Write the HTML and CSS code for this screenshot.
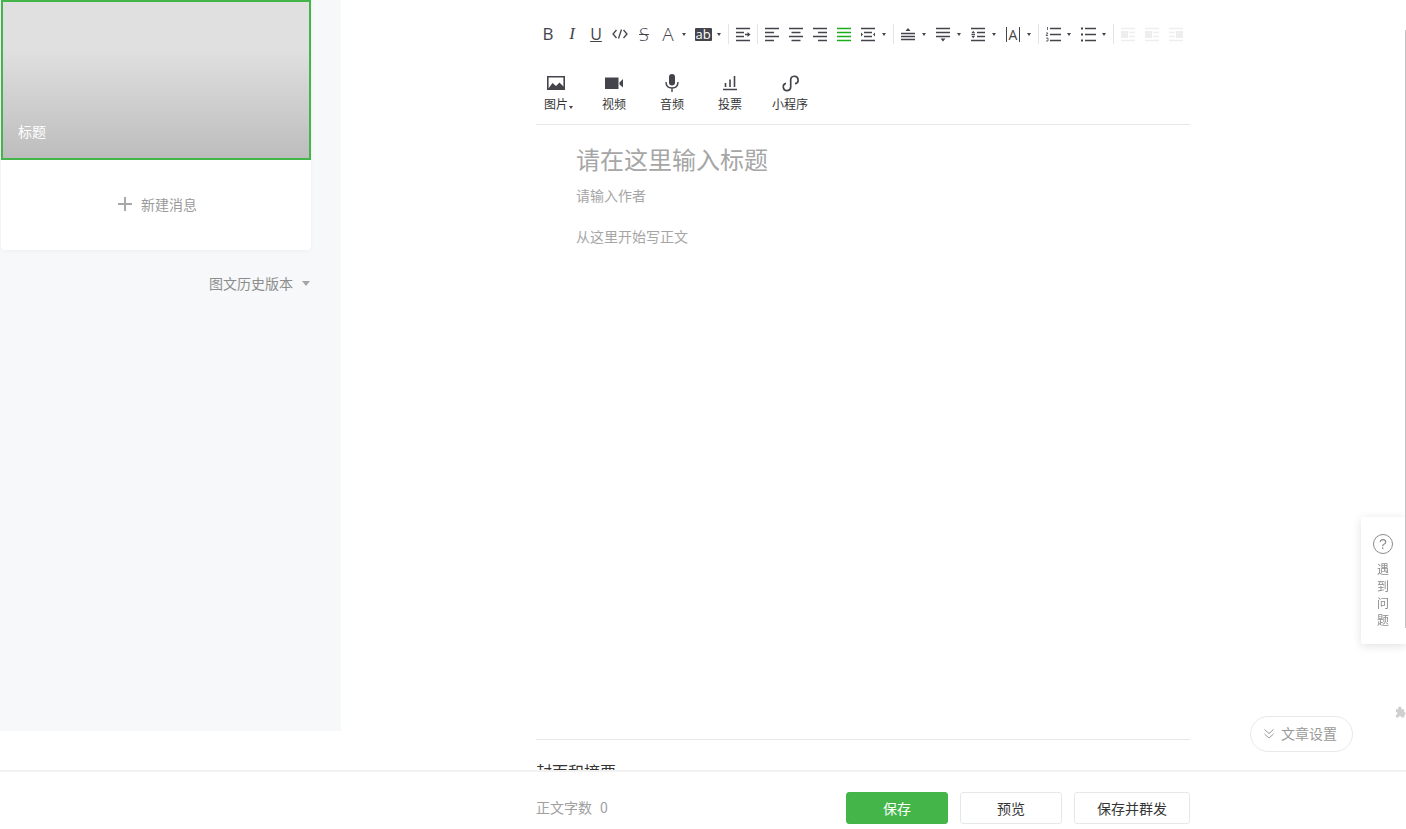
FILE: index.html
```html
<!DOCTYPE html>
<html lang="zh-CN">
<head>
<meta charset="utf-8">
<title>图文编辑</title>
<link rel="stylesheet" href="styles.css">
</head>
<body>
<svg class="sprite" aria-hidden="true">
  <symbol id="i-code" viewBox="0 0 16 16"><path d="M4.500 4 1 8l3.500 4M11.500 4 15 8l-3.500 4M9.500 3.500l-3 9" fill="none" stroke="currentColor" stroke-width="1.300"/></symbol>
  <symbol id="i-indent" viewBox="0 0 16 16"><path d="M1 2.500h14M1 6.500h8M1 10.500h8M1 14.500h14M10 8.500h3.500" fill="none" stroke="currentColor" stroke-width="1.400"/><path d="M12.500 6 15.500 8.500 12.500 11z" fill="currentColor"/></symbol>
  <symbol id="i-left" viewBox="0 0 16 16"><path d="M1 2.500h14M1 6.500h9M1 10.500h14M1 14.500h9" fill="none" stroke="currentColor" stroke-width="1.300"/></symbol>
  <symbol id="i-center" viewBox="0 0 16 16"><path d="M1 2.500h14M3.500 6.500h9M1 10.500h14M3.500 14.500h9" fill="none" stroke="currentColor" stroke-width="1.300"/></symbol>
  <symbol id="i-right" viewBox="0 0 16 16"><path d="M1 2.500h14M6 6.500h9M1 10.500h14M6 14.500h9" fill="none" stroke="currentColor" stroke-width="1.300"/></symbol>
  <symbol id="i-justify" viewBox="0 0 16 16"><path d="M1 2.500h14M1 6.500h14M1 10.500h14M1 14.500h14" fill="none" stroke="currentColor" stroke-width="1.300"/></symbol>
  <symbol id="i-dist" viewBox="0 0 16 16"><path d="M1 2.500h14M4 6.500h8M4 10.500h8M1 14.500h14" fill="none" stroke="currentColor" stroke-width="1.300"/><path d="M1 6.500v4L3 8.500zM15 6.500v4L13 8.500z" fill="currentColor"/></symbol>
  <symbol id="i-before" viewBox="0 0 16 16"><path d="M1 7.500h14M1 10.500h14M1 13.500h14" fill="none" stroke="currentColor" stroke-width="1.300"/><path d="M8 2 10.500 5h-5z" fill="currentColor"/></symbol>
  <symbol id="i-after" viewBox="0 0 16 16"><path d="M1 2.500h14M1 6.500h14M1 10.500h14" fill="none" stroke="currentColor" stroke-width="1.300"/><path d="M8 15.500 10.500 12.500h-5z" fill="currentColor"/></symbol>
  <symbol id="i-height" viewBox="0 0 16 16"><path d="M1 2.500h14M7 6.500h8M7 10.500h8M1 14.500h14M1.500 8.500h3.500" fill="none" stroke="currentColor" stroke-width="1.300"/><path d="M3.200 4.800 5 7H1.500zM3.200 12.200 5 10H1.500z" fill="currentColor"/></symbol>
  <symbol id="i-ol" viewBox="0 0 16 16"><path d="M2.500 1v3M1 7h2L1 9.500h2M1 12h2v3H1" fill="none" stroke="currentColor" stroke-width=".8"/><path d="M5 2.500h11M5 8.500h11M5 14.500h11" fill="none" stroke="currentColor" stroke-width="1.400"/></symbol>
  <symbol id="i-ul" viewBox="0 0 16 16"><path d="M5 2.500h11M5 8.500h11M5 14.500h11" fill="none" stroke="currentColor" stroke-width="1.400"/><path d="M1 1.500h2v2H1zM1 7.500h2v2H1zM1 13.500h2v2H1z" fill="currentColor"/></symbol>
  <symbol id="i-fl" viewBox="0 0 16 16"><path d="M1 2.500h14M1 14.500h14M9 6.500h6M9 10.500h6" fill="none" stroke="currentColor" stroke-width="1.300"/><path d="M1 5h7v7H1z" fill="currentColor"/></symbol>
  <symbol id="i-fr" viewBox="0 0 16 16"><path d="M1 2.500h14M1 14.500h14M1 6.500h6M1 10.500h6" fill="none" stroke="currentColor" stroke-width="1.300"/><path d="M8 5h7v7H8z" fill="currentColor"/></symbol>
</svg>

<div class="page">
  <aside class="side">
    <div class="card">
      <div class="cover"><span class="cover-title">标题</span></div>
      <div class="new-msg"><span class="plus"></span><span>新建消息</span></div>
    </div>
    <div class="history"><span>图文历史版本</span><i class="tri tri-history"></i></div>
  </aside>

  <main class="main">
    <div class="toolbar">
      <span class="btn txt txt-b">B</span>
      <span class="btn txt txt-i">I</span>
      <span class="btn txt txt-u"><u>U</u></span>
      <span class="btn"><svg class="ic"><use href="#i-code"/></svg></span>
      <span class="btn txt txt-s">S</span>
      <span class="btn txt txt-a">A</span><i class="caret"></i>
      <span class="btn push"><span class="ab">ab</span></span><i class="caret"></i>
      <i class="sep"></i>
      <span class="btn first"><svg class="ic"><use href="#i-indent"/></svg></span>
      <i class="sep tight"></i>
      <span class="btn first"><svg class="ic"><use href="#i-left"/></svg></span>
      <span class="btn"><svg class="ic"><use href="#i-center"/></svg></span>
      <span class="btn"><svg class="ic"><use href="#i-right"/></svg></span>
      <span class="btn on"><svg class="ic"><use href="#i-justify"/></svg></span>
      <span class="btn"><svg class="ic"><use href="#i-dist"/></svg></span><i class="caret"></i>
      <i class="sep"></i>
      <span class="btn first"><svg class="ic"><use href="#i-before"/></svg></span><i class="caret"></i>
      <span class="btn push"><svg class="ic"><use href="#i-after"/></svg></span><i class="caret"></i>
      <span class="btn push"><svg class="ic"><use href="#i-height"/></svg></span><i class="caret"></i>
      <span class="btn push"><span class="txt txt-w">A</span></span><i class="caret"></i>
      <i class="sep"></i>
      <span class="btn first"><svg class="ic"><use href="#i-ol"/></svg></span><i class="caret"></i>
      <span class="btn push"><svg class="ic"><use href="#i-ul"/></svg></span><i class="caret"></i>
      <i class="sep"></i>
      <span class="btn first off"><svg class="ic"><use href="#i-fl"/></svg></span>
      <span class="btn off"><svg class="ic"><use href="#i-fl"/></svg></span>
      <span class="btn off"><svg class="ic"><use href="#i-fr"/></svg></span>
    </div>

    <div class="insert">
      <div class="ins">
        <svg class="ins-ic" viewBox="0 0 20 18"><path d="M1.800 2.800h16.400v12.400H1.800z" fill="none" stroke="currentColor" stroke-width="1.600"/><path d="M2 15 6.500 9l3.500 3 3.500-3.500L18 13v2H2z" fill="currentColor"/></svg>
        <span class="ins-label">图片<i class="mini-tri"></i></span>
      </div>
      <div class="ins">
        <svg class="ins-ic" viewBox="0 0 20 18"><path d="M1 3.500h13.500v11.500H1z" fill="currentColor"/><path d="M15.500 8.500 19 5v8.500l-3.500-3z" fill="currentColor"/></svg>
        <span class="ins-label">视频</span>
      </div>
      <div class="ins">
        <svg class="ins-ic" viewBox="0 0 20 18"><rect x="7" y="0" width="6" height="11.500" rx="3" fill="currentColor"/><path d="M4 8c0 4 2.500 6 6 6s6-2 6-6M10 14v4" fill="none" stroke="currentColor" stroke-width="1.400"/></svg>
        <span class="ins-label">音频</span>
      </div>
      <div class="ins">
        <svg class="ins-ic" viewBox="0 0 20 18"><path d="M3 15.500h14M5.500 13V9M10 13V5.500M14.500 13V2" fill="none" stroke="currentColor" stroke-width="1.600"/></svg>
        <span class="ins-label">投票</span>
      </div>
      <div class="ins ins-last">
        <svg class="ins-ic" viewBox="0 0 20 18"><path d="M6 9.400A3.700 3.700 0 1 0 10.700 13V6A3.700 3.700 0 1 1 15 9.600" fill="none" stroke="currentColor" stroke-width="1.700"/></svg>
        <span class="ins-label">小程序</span>
      </div>
    </div>

    <div class="editor">
      <h1 class="ph-title">请在这里输入标题</h1>
      <p class="ph-author">请输入作者</p>
      <p class="ph-body">从这里开始写正文</p>
    </div>

    <section class="extra">
      <h2 class="extra-title">封面和摘要</h2>
    </section>
  </main>
</div>

<i class="scroll-line"></i>
<aside class="help">
  <span class="help-q">?</span>
  <span class="help-text">遇到问题</span>
</aside>
<svg class="puzzle" viewBox="0 0 12 12"><path d="M1 3h2.500C3 1 4 0 5.200 0S7.400 1 7 3h3v3c2-.5 2 4 0 3.500V12H7c.5-2-3.500-2-3 0H1V9c2 .5 2-3.500 0-3z" fill="currentColor"/></svg>
<button class="settings">
  <svg class="chev" viewBox="0 0 12 12"><path d="M1.500 1.500 6 5.500l4.500-4M1.500 6 6 10l4.500-4" fill="none" stroke="currentColor" stroke-width="1"/></svg>
  <span class="settings-text">文章设置</span>
</button>

<footer class="bar">
  <div class="bar-inner">
    <span class="count">正文字数<b class="count-num">0</b></span>
    <span class="bar-btns">
      <button class="fbtn primary">保存</button>
      <button class="fbtn">预览</button>
      <button class="fbtn wide">保存并群发</button>
    </span>
  </div>
</footer>
</body>
</html>
```

FILE: styles.css
```css
* { box-sizing: border-box; }
html, body {
  margin: 0;
  height: 829px;
  overflow: hidden;
  background: #fff;
  font-family: "Noto Sans CJK SC", "Liberation Sans", sans-serif;
  color: #353535;
}
.sprite { display: none; }
i { font-style: normal; display: block; }

.page { display: flex; align-items: flex-start; }

/* sidebar */
.side {
  width: 341px;
  height: 731px;
  flex: none;
  background: #f6f8f9;
  padding-left: 1px;
}
.card {
  width: 310px;
  height: 250px;
  background: #fff;
  border-radius: 0 0 4px 4px;
  box-shadow: 0 1px 4px rgba(0, 0, 0, .04);
}
.cover {
  height: 160px;
  border: 2px solid #44b549;
  background: linear-gradient(#e0e0e0 0, #e0e0e0 30%, #bdbdbd 100%);
  padding: 119px 0 0 15px;
}
.cover-title {
  display: block;
  color: #fff;
  font-size: 14px;
  line-height: 20px;
}
.new-msg {
  height: 88px;
  display: flex;
  align-items: center;
  padding-left: 117px;
  font-size: 14px;
  color: #9a9a9a;
  gap: 9px;
}
.plus {
  width: 14px;
  height: 14px;
  background:
    linear-gradient(#a8a8a8, #a8a8a8) center / 14px 2px no-repeat,
    linear-gradient(#a8a8a8, #a8a8a8) center / 2px 14px no-repeat;
}
.history {
  margin-top: 23px;
  width: 309px;
  display: flex;
  justify-content: flex-end;
  align-items: center;
  font-size: 14px;
  line-height: 20px;
  color: #8d8d8d;
  gap: 9px;
}
.tri { width: 0; height: 0; }
.tri-history {
  border: 4.500px solid transparent;
  border-top: 5px solid #a5a5a5;
  border-bottom: 0;
}

/* main column */
.main {
  width: 654px;
  margin-left: 195px;
  flex: none;
}
.toolbar {
  display: flex;
  align-items: center;
  height: 46px;
  padding-top: 22px;
}
.btn {
  width: 24px;
  height: 24px;
  flex: none;
  display: flex;
  align-items: center;
  justify-content: center;
  color: #44444c;
}
.btn.push { margin-left: 3px; }
.btn.first { margin-left: 2px; }
.btn.on { color: #1aad19; }
.btn.off { color: #eeeeee; }
.ic { width: 16px; height: 16px; display: block; }
.txt { font-family: "Open Sans", "Liberation Sans", sans-serif; line-height: 24px; }
.txt-b { font-size: 17px; }
.txt-i { font-size: 17px; font-style: italic; font-family: "Liberation Serif", serif; }
.txt-u { font-size: 16px; }
.txt-s { font-size: 18px; font-weight: 300; text-decoration: line-through; }
.txt-a { font-size: 19px; font-weight: 300; }
.txt-w {
  display: block;
  height: 15px;
  padding: 0 2px;
  border-left: 1.500px solid #44444c;
  border-right: 1.500px solid #44444c;
  font-size: 14px;
  line-height: 15px;
}
.ab {
  display: block;
  width: 17px;
  height: 13px;
  background: #44444c;
  color: #fff;
  border-radius: 1px;
  font: 13px/12px "Open Sans", "Liberation Sans", sans-serif;
  text-align: center;
}
.caret {
  width: 8px;
  flex: none;
  display: flex;
  justify-content: center;
}
.caret::before {
  content: "";
  border: 2px solid transparent;
  border-top: 3px solid #44444c;
  border-bottom: 0;
}
.sep {
  width: 1px;
  height: 20px;
  margin-left: 5px;
  background: #e4e4e4;
  flex: none;
}
.sep.tight { margin-left: 2px; }

.insert {
  display: flex;
  gap: 34px;
  height: 79px;
  padding: 28px 0 0 8px;
  border-bottom: 1px solid #e7e7eb;
}
.ins {
  display: flex;
  flex-direction: column;
  align-items: center;
  color: #44444c;
}
.ins-last { margin-left: -4px; }
.ins-ic { width: 20px; height: 18px; display: block; }
.ins-label {
  position: relative;
  margin-top: 3px;
  font-size: 12px;
  line-height: 18px;
  color: #353535;
}
.mini-tri {
  position: absolute;
  right: -5px;
  bottom: 4px;
  border: 2px solid transparent;
  border-top: 3px solid #44444c;
  border-bottom: 0;
}

.editor {
  height: 614px;
  padding: 17px 40px 0;
}
.ph-title {
  margin: 0;
  font-size: 24px;
  font-weight: 400;
  line-height: 34px;
  color: #a6a6a6;
}
.ph-author {
  margin: 8px 0 0;
  font-size: 14px;
  line-height: 22px;
  color: #a6a6a6;
}
.ph-body {
  margin: 19px 0 0;
  font-size: 14px;
  line-height: 22px;
  color: #a6a6a6;
}
.extra {
  border-top: 1px solid #e7e7eb;
  padding-top: 19px;
}
.extra-title {
  margin: 0;
  font-size: 16px;
  font-weight: 400;
  line-height: 24px;
  color: #353535;
}

/* overlays */
.scroll-line {
  position: fixed;
  right: 0;
  top: 30px;
  width: 1px;
  height: 598px;
  background: #c4c4c4;
  z-index: 3;
}
.help {
  position: fixed;
  right: 0;
  top: 517px;
  width: 45px;
  height: 127px;
  background: #fff;
  border-radius: 3px 0 0 3px;
  box-shadow: 0 2px 10px rgba(0, 0, 0, .12);
  display: flex;
  flex-direction: column;
  align-items: center;
  padding: 17px 1px 0 0;
  z-index: 2;
}
.help-q {
  width: 20px;
  height: 20px;
  border: 1px solid #8c8c8c;
  border-radius: 50%;
  font: 14px/18px "Liberation Sans", sans-serif;
  text-align: center;
  color: #8c8c8c;
}
.help-text {
  width: 12px;
  margin-top: 6px;
  font-size: 12px;
  line-height: 17px;
  color: #8c8c8c;
  word-break: break-all;
}
.puzzle {
  position: fixed;
  right: 0;
  top: 706px;
  width: 11px;
  height: 12px;
  color: #cfcfcf;
}
.settings {
  position: fixed;
  left: 1250px;
  top: 716px;
  width: 103px;
  height: 36px;
  padding: 0 0 0 12px;
  display: flex;
  align-items: center;
  gap: 6px;
  border: 1px solid #e8e8e8;
  border-radius: 18px;
  background: #fff;
  font: 14px "Noto Sans CJK SC", sans-serif;
  color: #9a9a9a;
}
.settings-text { margin-bottom: 2px; }
.chev { width: 12px; height: 12px; flex: none; }

.bar {
  position: fixed;
  left: 0;
  right: 0;
  bottom: 0;
  height: 59px;
  background: #fff;
  border-top: 2px solid #f2f2f2;
  z-index: 1;
}
.bar-inner {
  width: 654px;
  margin-left: 536px;
  height: 57px;
  display: flex;
  justify-content: space-between;
  align-items: center;
  padding: 20px 0 5px;
}
.count { font-size: 14px; line-height: 20px; margin-bottom: 2px; color: #a0a0a0; }
.count-num { font-weight: 400; margin-left: 8px; }
.bar-btns { display: flex; gap: 12px; }
.fbtn {
  width: 102px;
  height: 32px;
  padding: 0;
  background: #fff;
  border: 1px solid #e4e8eb;
  border-radius: 3px;
  font: 14px/30px "Noto Sans CJK SC", sans-serif;
  color: #353535;
}
.fbtn.primary { background: #44b549; border-color: #44b549; color: #fff; }
.fbtn.wide { width: 116px; }
```
